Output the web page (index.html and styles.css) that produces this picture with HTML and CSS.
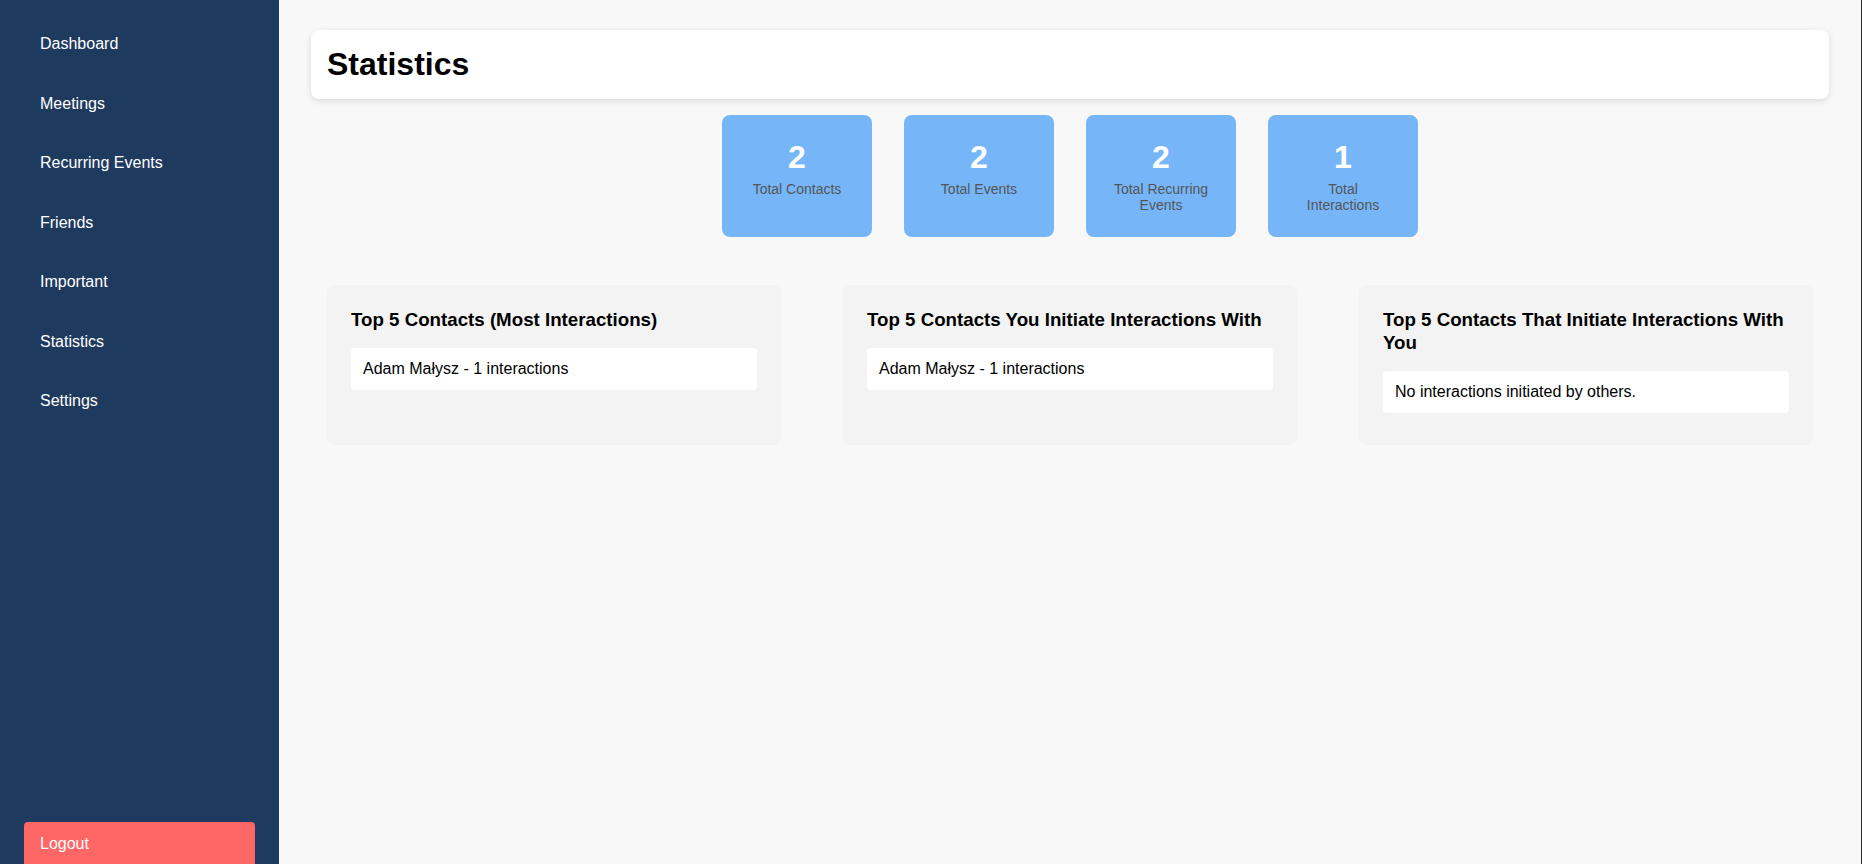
FILE: index.html
```html
<!DOCTYPE html>
<html lang="en">
<head>
<meta charset="utf-8">
<title>Statistics</title>
<link rel="stylesheet" href="styles.css">
</head>
<body>
<div class="app">
  <aside class="sidebar">
    <nav>
      <ul class="nav">
        <li><a href="#">Dashboard</a></li>
        <li><a href="#">Meetings</a></li>
        <li><a href="#">Recurring Events</a></li>
        <li><a href="#">Friends</a></li>
        <li><a href="#">Important</a></li>
        <li><a href="#">Statistics</a></li>
        <li><a href="#">Settings</a></li>
      </ul>
    </nav>
    <button class="logout">Logout</button>
  </aside>
  <main class="main">
    <header class="page-header">
      <h1>Statistics</h1>
    </header>
    <section class="stats">
      <div class="stat">
        <div class="stat-num">2</div>
        <div class="stat-label">Total Contacts</div>
      </div>
      <div class="stat">
        <div class="stat-num">2</div>
        <div class="stat-label">Total Events</div>
      </div>
      <div class="stat">
        <div class="stat-num">2</div>
        <div class="stat-label">Total Recurring Events</div>
      </div>
      <div class="stat">
        <div class="stat-num">1</div>
        <div class="stat-label">Total Interactions</div>
      </div>
    </section>
    <section class="lists">
      <div class="list-card">
        <h3>Top 5 Contacts (Most Interactions)</h3>
        <ul class="items">
          <li>Adam Małysz - 1 interactions</li>
        </ul>
      </div>
      <div class="list-card">
        <h3>Top 5 Contacts You Initiate Interactions With</h3>
        <ul class="items">
          <li>Adam Małysz - 1 interactions</li>
        </ul>
      </div>
      <div class="list-card">
        <h3>Top 5 Contacts That Initiate Interactions With You</h3>
        <ul class="items">
          <li>No interactions initiated by others.</li>
        </ul>
      </div>
    </section>
  </main>
</div>
</body>
</html>
```
FILE: styles.css
```css
* { box-sizing: border-box; }

html, body {
  margin: 0;
  padding: 0;
  height: 100%;
}

body {
  font-family: "Liberation Sans", Arial, sans-serif;
  background: #f8f8f8;
  color: #000;
  overflow: hidden;
}

.app {
  display: flex;
  height: 864px;
}

.sidebar {
  width: 279px;
  flex: 0 0 279px;
  background: #1f3a5f;
  display: flex;
  flex-direction: column;
  padding: 21px 24px 0;
}

.nav {
  list-style: none;
  margin: 0;
  padding: 0;
}

.nav li {
  margin-bottom: 13.5px;
}

.nav a {
  display: block;
  color: #fff;
  text-decoration: none;
  font-size: 16px;
  line-height: 20px;
  padding: 13px 16px;
}

.logout {
  margin-top: auto;
  margin-bottom: -2px;
  flex: 0 0 44px;
  width: 100%;
  height: 44px;
  background: #ff6666;
  color: #fff;
  border: none;
  border-radius: 4px 4px 0 0;
  font-family: inherit;
  font-size: 16px;
  line-height: 20px;
  text-align: left;
  padding: 0 16px;
}

.main {
  flex: 1;
  min-width: 0;
  padding: 30px 32px;
  border-right: 1px solid #2a2a2a;
}

.page-header {
  background: #fff;
  border-radius: 8px;
  box-shadow: 0 2px 6px rgba(0, 0, 0, 0.12);
  padding: 16px;
}

.page-header h1 {
  margin: 0;
  font-size: 32px;
  line-height: 37px;
  font-weight: bold;
}

.stats {
  display: flex;
  justify-content: center;
  gap: 32px;
  margin-top: 16px;
  margin-bottom: 48px;
}

.stat {
  width: 150px;
  height: 122px;
  background: #76b5f8;
  border-radius: 8px;
  padding: 24px 24px 0;
  text-align: center;
}

.stat-num {
  color: #fff;
  font-size: 32px;
  font-weight: bold;
  line-height: 37px;
  margin-bottom: 5px;
}

.stat-label {
  color: #555;
  font-size: 14px;
  line-height: 16px;
}

.lists {
  display: grid;
  grid-template-columns: repeat(3, 1fr);
  gap: 62px;
  padding: 0 16px;
}

.list-card {
  background: #f3f3f3;
  border-radius: 8px;
  padding: 24px;
}

.list-card h3 {
  margin: 0 0 16.5px;
  font-size: 18.72px;
  line-height: 22.5px;
  font-weight: bold;
}

.items {
  list-style: none;
  margin: 0;
  padding: 0;
}

.items li {
  background: #fff;
  border-radius: 4px;
  padding: 12px;
  font-size: 16px;
  line-height: 18.4px;
  margin-bottom: 8px;
}
```
